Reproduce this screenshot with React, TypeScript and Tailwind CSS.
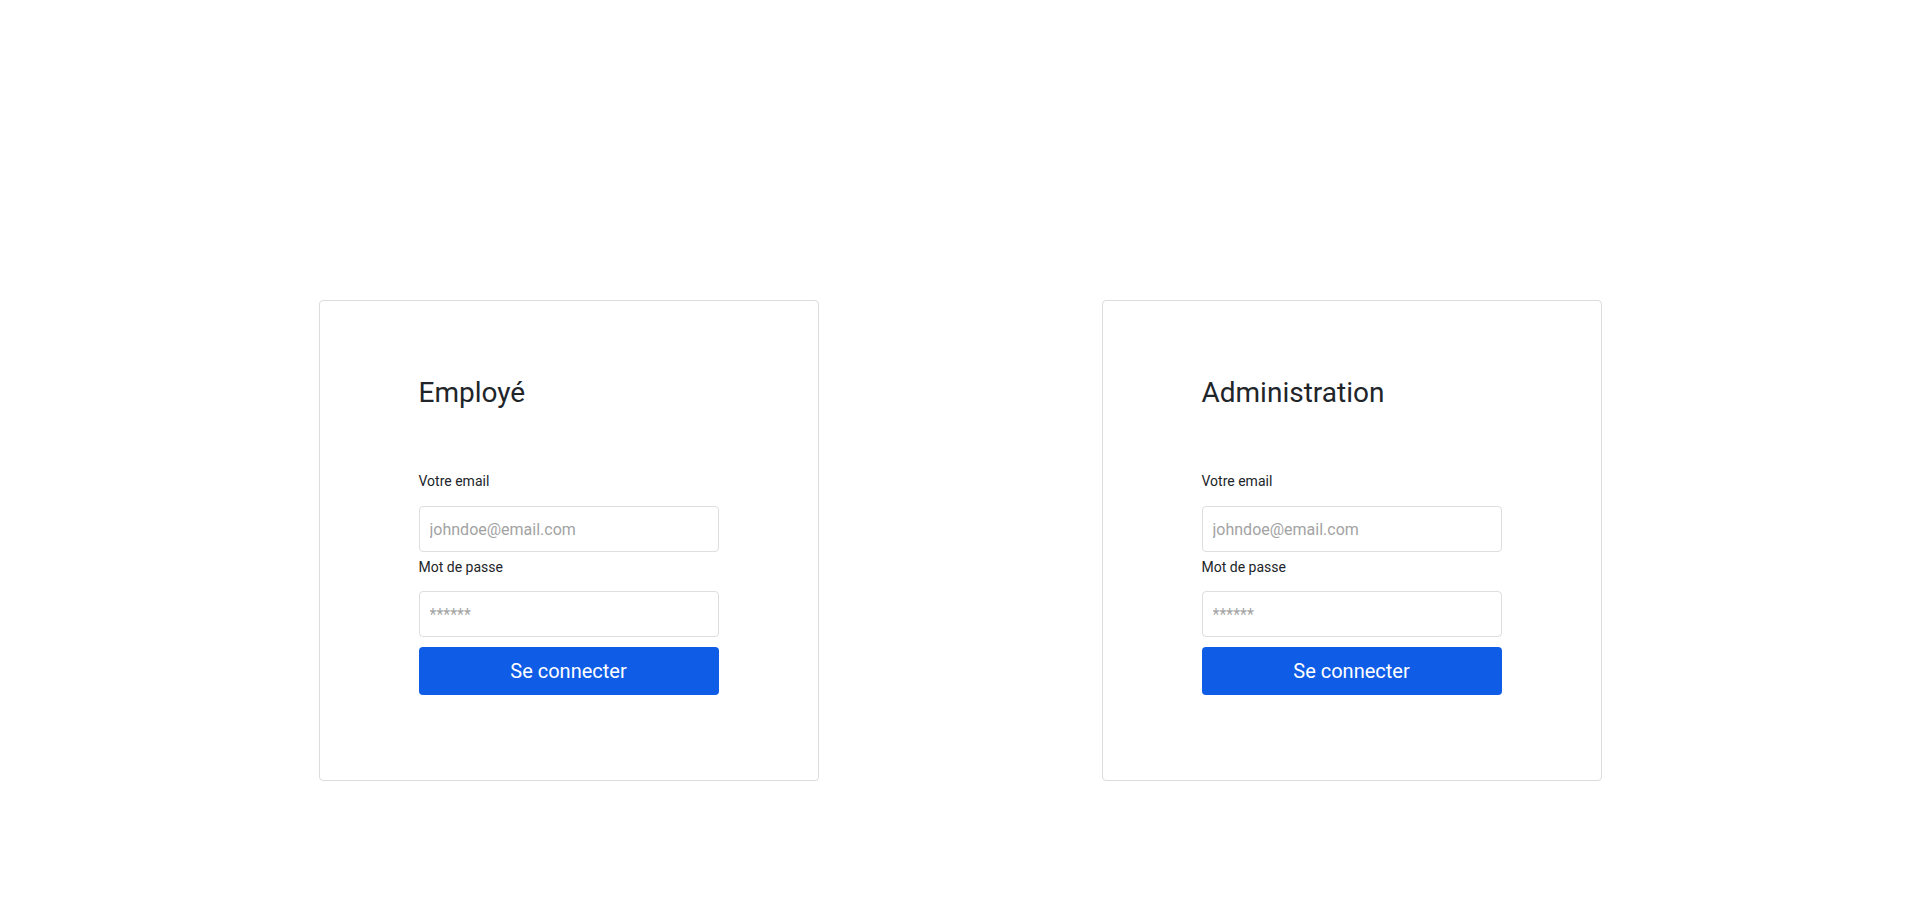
import React from "react";

function LoginCard({ title }: { title: string }) {
  return (
    <div className="w-[500px] h-[481px] border border-[#dcdcdc] rounded-[4px] bg-white pt-[75px] px-[99px]">
      <h2 className="text-[28px] leading-[34px] font-normal text-[#212529]">{title}</h2>
      <form className="mt-[61px] flex flex-col" onSubmit={(e) => e.preventDefault()}>
        <label className="text-[14px] leading-5 text-[#212529]">Votre email</label>
        <input
          type="email"
          placeholder="johndoe@email.com"
          className="mt-[15px] h-[46px] w-full border border-[#dedede] rounded-[4px] px-[10px] text-[16px] text-[#212529] placeholder:text-[#a3a3a3] outline-none"
        />
        <label className="mt-[5px] text-[14px] leading-5 text-[#212529]">Mot de passe</label>
        <input
          type="password"
          placeholder="******"
          className="mt-[14px] h-[46px] w-full border border-[#dedede] rounded-[4px] px-[10px] text-[16px] text-[#212529] placeholder:text-[#a3a3a3] outline-none"
        />
        <button
          type="submit"
          className="mt-[10px] h-[48px] w-full rounded-[4px] bg-[#0f5ce6] text-white text-[20px] leading-none"
        >
          Se connecter
        </button>
      </form>
    </div>
  );
}

export default function App() {
  return (
    <div
      className="min-h-[912px] w-full bg-white pt-[300px] flex justify-center gap-[283px]"
      style={{ fontFamily: "Roboto, 'Liberation Sans', sans-serif" }}
    >
      <LoginCard title="Employé" />
      <LoginCard title="Administration" />
    </div>
  );
}
